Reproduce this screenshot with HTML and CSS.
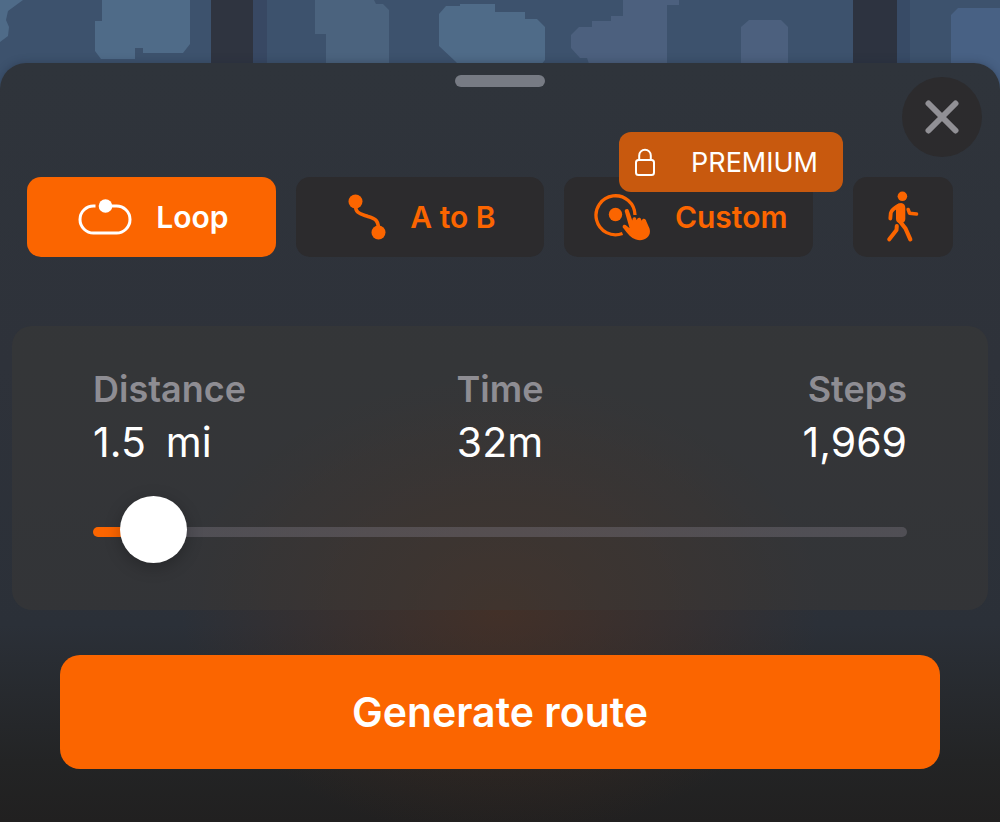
FILE: index.html
```html
<!DOCTYPE html>
<html lang="en">
<head>
<meta charset="utf-8">
<meta name="viewport" content="width=device-width, initial-scale=1">
<title>Route planner</title>
<link rel="stylesheet" href="styles.css">
</head>
<body>
<div class="screen">
  <svg class="map" viewBox="0 0 1000 96" preserveAspectRatio="xMidYMin slice" aria-hidden="true">
    <rect width="1000" height="96" fill="#3d526d"/>
    <path fill="#4f6b88" d="M0 0H23L8 11L6 20L9 27L8 36L0 42Z"/>
    <path fill="#4f6b88" d="M102 0H190V44L183 53H143V48H135V59H101L95 51V21H102Z"/>
    <path fill="#2f3440" d="M211 0H253V96H211Z"/>
    <path fill="#384863" d="M253 0H267V96H253Z"/>
    <path fill="#4b637e" d="M315 0H374L376 4H383L389 10V96H326V34H315Z"/>
    <path fill="#4f6b88" d="M439 14L446 6H460V4H495V12H525V19H537L545 27V60L540 66H460L455 61L439 46Z"/>
    <path fill="#4c607e" d="M623 0H679V5H667V96H600L587 58H580L571 48V35L579 27H592V21H611V16H623Z"/>
    <path fill="#4c607e" d="M741 27L749 20H781L788 27V96H741Z"/>
    <path fill="#2d3340" d="M853 0H897V96H853Z"/>
    <path fill="#384b66" d="M897 0H910V96H897Z"/>
    <path fill="#486184" d="M951 15L958 8H1000V96H951Z"/>
  </svg>

  <main class="sheet">
    <header class="sheet-header">
      <button class="handle" type="button" aria-label="Resize panel"><span class="handle-bar"></span></button>
      <button class="close" type="button" aria-label="Close">
        <svg width="34" height="34" viewBox="0 0 34 34" aria-hidden="true">
          <path d="M3.500 3.500L30.500 30.500M30.500 3.500L3.500 30.500" stroke="#919095" stroke-width="6" stroke-linecap="round"/>
        </svg>
      </button>
    </header>

    <nav class="modes" aria-label="Route type">
      <div class="mode-group">
        <button class="mode mode-labelled mode-active" type="button" aria-pressed="true">
          <svg width="54" height="38" viewBox="0 0 54 38" fill="none" aria-hidden="true">
            <path d="M17.500 8H16A13.500 13.500 0 0 0 2 21.500A13.500 13.500 0 0 0 16 35H38A13.500 13.500 0 0 0 52 21.500A13.500 13.500 0 0 0 38 8H29" stroke="currentColor" stroke-width="3"/>
            <circle cx="27.500" cy="8" r="6.800" fill="currentColor"/>
          </svg>
          <span>Loop</span>
        </button>
        <button class="mode mode-labelled" type="button" aria-pressed="false">
          <svg width="38" height="46" viewBox="0 0 38 46" fill="none" aria-hidden="true">
            <path d="M7.500 10C7 20 13 20 20 22.500C28 24.500 31 27 30.500 38" stroke="currentColor" stroke-width="3.600"/>
            <circle cx="7.500" cy="7.500" r="7" fill="currentColor"/>
            <circle cx="30.500" cy="38.500" r="7" fill="currentColor"/>
          </svg>
          <span>A to B</span>
        </button>
        <button class="mode mode-labelled" type="button" aria-pressed="false">
          <svg width="57" height="48" viewBox="0 0 57 48" fill="none" aria-hidden="true">
            <path d="M41 22A19.500 19.500 0 1 0 28.500 40.500" stroke="currentColor" stroke-width="3.300"/>
            <circle cx="21.500" cy="21.500" r="6.700" fill="currentColor"/>
            <path fill="currentColor" d="M30.800 18.500C30.300 15.800 34 15 34.800 17.500L38.300 27.500L38.700 25.200C39.300 23.700 41.800 23.900 42.200 25.500L42.500 27.200L43.500 25.500C44.600 24.100 46.900 24.700 47.200 26.500V27.700L48.600 26.200C50.200 25.200 52 26.100 52.300 28.200L55.500 35.500C58 44 49.500 49 42 46.500C37 45 34 41 28.800 34.500C28 31.800 31 31 32.600 32.800L35.600 35.300Z"/>
          </svg>
          <span>Custom</span>
          <span class="badge">
            <svg width="20" height="28" viewBox="0 0 20 28" fill="none" stroke="currentColor" stroke-width="2" aria-hidden="true">
              <rect x="1" y="12" width="18" height="15" rx="2.500"/>
              <path d="M4.200 12V7.500A5.800 5.800 0 0 1 15.800 7.500V12"/>
            </svg>
            <span>PREMIUM</span>
          </span>
        </button>
      </div>
      <button class="mode mode-walk" type="button" aria-label="Walking">
        <svg width="32" height="52" viewBox="0 0 32 52" fill="none" stroke="currentColor" stroke-linecap="round" stroke-linejoin="round" aria-hidden="true">
          <circle cx="15.400" cy="5.300" r="4.800" fill="currentColor" stroke="none"/>
          <path d="M12 14.500Q4.500 18.500 3.800 22L3.300 27.500" stroke-width="3.800"/>
          <path d="M8.500 14.500Q11 12 14 12Q18.300 12.500 18.300 17V28Q18.300 32 13.500 32Q9 32 9 28V19Z" fill="currentColor" stroke="none"/>
          <path d="M12.200 29.500L18.500 37.500L23.300 48.300" stroke-width="4.200"/>
          <path d="M9.800 35L9.500 39L2.300 48.300" stroke-width="4"/>
          <path d="M21.200 18.500L22.500 22.200L29.500 23" stroke-width="3.600"/>
        </svg>
      </button>
    </nav>

    <section class="card" aria-label="Route length">
      <dl class="stats">
        <div class="stat"><dt>Distance</dt><dd class="measure"><span>1.5</span><span>mi</span></dd></div>
        <div class="stat stat-center"><dt>Time</dt><dd>32m</dd></div>
        <div class="stat stat-end"><dt>Steps</dt><dd>1,969</dd></div>
      </dl>
      <input class="slider" type="range" min="0.5" max="28" step="0.5" value="1.5" aria-label="Distance in miles">
    </section>

    <button class="generate" type="button">Generate route</button>
  </main>
</div>
</body>
</html>
```
FILE: styles.css
```css
* {
  box-sizing: border-box;
}

body {
  margin: 0;
  background: #212121;
  color: #fff;
  font-family: Inter, "Liberation Sans", sans-serif;
}

button {
  margin: 0;
  padding: 0;
  border: 0;
  font: inherit;
  color: inherit;
  cursor: pointer;
}

svg {
  flex: none;
}

.screen {
  display: flex;
  flex-direction: column;
  min-height: 100vh;
}

.map {
  display: block;
  width: 100%;
  height: 96px;
  margin-bottom: -33px;
}

.sheet {
  position: relative;
  flex: 1;
  display: flex;
  flex-direction: column;
  padding-bottom: 53px;
  border-radius: 26px 26px 0 0;
  background:
    radial-gradient(ellipse 320px 230px at 50% 545px, rgba(90, 48, 24, 0.5), rgba(90, 48, 24, 0.26) 50%, transparent),
    linear-gradient(#2f343b, #2e323a 40%, #2b3038 74%, #232425 92%, #212020);
  box-shadow: 0 0 8px rgba(30, 40, 60, 0.4);
}

.sheet-header {
  display: grid;
  grid-template-columns: 1fr auto 1fr;
  height: 94px;
  padding: 6px 18px 0;
}

.handle {
  grid-column: 2;
  align-self: start;
  display: flex;
  align-items: center;
  height: 24px;
  background: none;
}

.handle-bar {
  width: 90px;
  height: 12px;
  border-radius: 6px;
  background: #777b84;
}

.close {
  grid-column: 3;
  align-self: end;
  justify-self: end;
  display: grid;
  place-items: center;
  width: 80px;
  height: 80px;
  border-radius: 50%;
  background: #2c2b2d;
}

.modes {
  display: flex;
  gap: 40px;
  padding: 20px 47px 0 27px;
}

.mode-group {
  flex: 1;
  display: grid;
  grid-template-columns: repeat(3, 1fr);
  gap: 20px;
}

.mode {
  position: relative;
  display: flex;
  align-items: center;
  justify-content: center;
  gap: 24px;
  height: 80px;
  border-radius: 14px;
  background: #2c2b2d;
  color: #fb6500;
  font-size: 30px;
  font-weight: 600;
}

.mode-labelled {
  padding-left: 4px;
}

.mode-active {
  background: #fb6500;
  color: #fff;
}

.mode-walk {
  width: 100px;
}

.badge {
  position: absolute;
  top: -45px;
  right: -30px;
  display: flex;
  align-items: center;
  justify-content: space-between;
  width: 224px;
  height: 60px;
  padding: 0 25px 0 16px;
  border-radius: 12px;
  background: #c8590e;
  color: #fff;
  font-size: 27px;
  font-weight: 400;
}

.card {
  margin: 69px 12px 0;
  padding: 40px 81px 0;
  height: 284px;
  border-radius: 20px;
  background: rgba(62, 60, 54, 0.42);
}

.stats {
  display: grid;
  grid-template-columns: 1fr auto 1fr;
  margin: 0;
}

.stat-center {
  text-align: center;
}

.stat-end {
  text-align: right;
}

.stat dt {
  color: #8e8d93;
  font-size: 36px;
  font-weight: 600;
  line-height: 46px;
}

.stat dd {
  margin: 0;
  font-size: 41px;
  line-height: 60px;
}

.measure {
  display: flex;
  gap: 20px;
}

.slider {
  display: block;
  width: 100%;
  height: 68px;
  margin: 26px 0 0;
  background: none;
  appearance: none;
}

.slider::-webkit-slider-runnable-track {
  height: 10px;
  border-radius: 5px;
  background: linear-gradient(90deg, #fb6500 60px, rgba(120, 115, 125, 0.42) 60px);
}

.slider::-webkit-slider-thumb {
  appearance: none;
  width: 67px;
  height: 67px;
  margin-top: -31px;
  border: 0;
  border-radius: 50%;
  background: #fff;
  box-shadow: 0 4px 16px rgba(0, 0, 0, 0.25);
}

.generate {
  height: 114px;
  margin: 45px 60px 0;
  border-radius: 20px;
  background: #fb6500;
  font-size: 41px;
  font-weight: 600;
}
```
